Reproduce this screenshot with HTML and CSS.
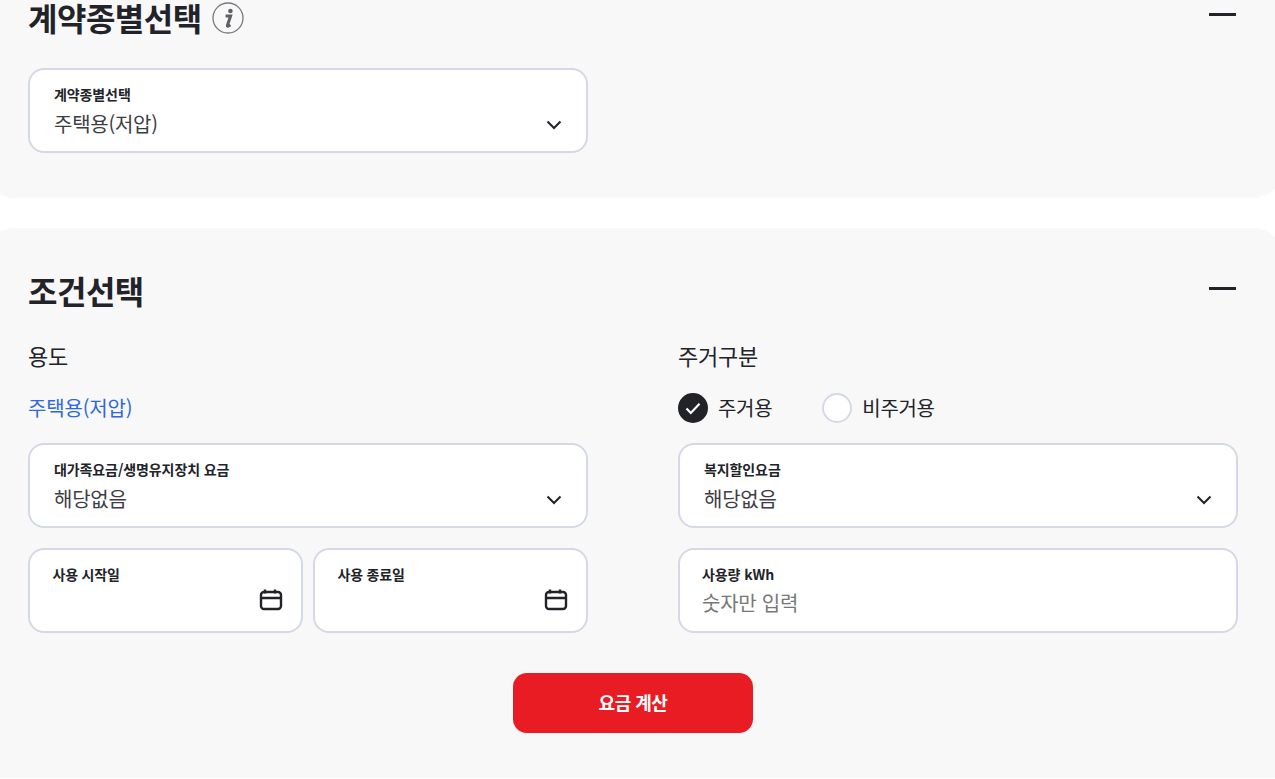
FILE: index.html
```html
<!DOCTYPE html>
<html lang="ko">
<head>
  <meta charset="UTF-8">
  <title>전기요금 계산</title>
  <link rel="stylesheet" href="styles.css">
</head>
<body>
  <section class="panel panel-first">
    <div class="panel-head">
      <h2 class="panel-title">계약종별선택
        <svg class="info-icon" width="32" height="32" viewBox="0 0 32 32"><circle cx="16" cy="16" r="15" fill="none" stroke="#77777c" stroke-width="1.3"/><circle cx="18.4" cy="9" r="2.3" fill="#5f5f65"/><path d="M13.6 13.9h5l-3.2 9.6c-.2.8.5 1 1.1.6l1.8-1.4" fill="none" stroke="#5f5f65" stroke-width="3"/></svg>
      </h2>
      <span class="dash"></span>
    </div>
    <div class="field-row half">
      <div class="field select">
        <label class="field-label">계약종별선택</label>
        <div class="field-value">주택용(저압)</div>
        <svg class="chevron" width="16" height="10" viewBox="0 0 16 10"><path d="M1.5 1.5 8 8l6.5-6.5" fill="none" stroke="#222329" stroke-width="2"/></svg>
      </div>
    </div>
  </section>

  <section class="panel panel-second">
    <div class="panel-head">
      <h2 class="panel-title">조건선택</h2>
      <span class="dash"></span>
    </div>
    <div class="columns">
      <div class="column">
        <h3 class="sub-title">용도</h3>
        <div class="sub-line"><a class="usage-link">주택용(저압)</a></div>
        <div class="field select">
          <label class="field-label">대가족요금/생명유지장치 요금</label>
          <div class="field-value">해당없음</div>
          <svg class="chevron" width="16" height="10" viewBox="0 0 16 10"><path d="M1.5 1.5 8 8l6.5-6.5" fill="none" stroke="#222329" stroke-width="2"/></svg>
        </div>
        <div class="date-row">
          <div class="field date">
            <label class="field-label">사용 시작일</label>
            <svg class="calendar" width="24" height="24" viewBox="0 0 24 24"><rect x="2" y="4" width="20" height="17" rx="3" fill="none" stroke="#222329" stroke-width="2.4"/><path d="M2 10h20M6 1.5v4M16 1.5v4" fill="none" stroke="#222329" stroke-width="2.4"/></svg>
          </div>
          <div class="field date">
            <label class="field-label">사용 종료일</label>
            <svg class="calendar" width="24" height="24" viewBox="0 0 24 24"><rect x="2" y="4" width="20" height="17" rx="3" fill="none" stroke="#222329" stroke-width="2.4"/><path d="M2 10h20M6 1.5v4M16 1.5v4" fill="none" stroke="#222329" stroke-width="2.4"/></svg>
          </div>
        </div>
      </div>
      <div class="column">
        <h3 class="sub-title">주거구분</h3>
        <div class="sub-line radios">
          <label class="radio">
            <span class="radio-mark checked"><svg width="16" height="13" viewBox="0 0 16 13"><path d="M1.5 6.5 5.8 11 14.5 1.8" fill="none" stroke="#fff" stroke-width="2.2"/></svg></span>
            <span class="radio-text">주거용</span>
          </label>
          <label class="radio">
            <span class="radio-mark"></span>
            <span class="radio-text">비주거용</span>
          </label>
        </div>
        <div class="field select">
          <label class="field-label">복지할인요금</label>
          <div class="field-value">해당없음</div>
          <svg class="chevron" width="16" height="10" viewBox="0 0 16 10"><path d="M1.5 1.5 8 8l6.5-6.5" fill="none" stroke="#222329" stroke-width="2"/></svg>
        </div>
        <div class="field input">
          <label class="field-label">사용량 kWh</label>
          <div class="field-value placeholder">숫자만 입력</div>
        </div>
      </div>
    </div>
    <div class="actions">
      <button class="calc-btn" type="button">요금 계산</button>
    </div>
  </section>
</body>
</html>
```

FILE: styles.css
```css
html, body {
  height: 779px;
  overflow: hidden;
}

body {
  margin: 0;
  background: #fff;
  color: #222329;
  font-family: "Noto Sans CJK KR", "Noto Sans", sans-serif;
}

/* panels run slightly past the window so only part of each corner shows */
.panel {
  margin: 0 -8px 0 -15px;
  padding: 0 45px 0 43px;
  background: #f8f8f8;
}

.panel-first {
  height: 198px;
  box-sizing: border-box;
  border-radius: 0 0 30px 30px;
}

.panel-second {
  height: 550px;
  box-sizing: border-box;
  margin-top: 30px;
  padding-top: 39px;
  border-radius: 30px 30px 0 0;
}

.panel-head {
  display: flex;
  align-items: center;
  justify-content: space-between;
  height: 46px;
}

.panel-first .panel-head {
  height: 34px;
  margin-bottom: 34px;
}

.panel-first .dash {
  margin-bottom: 5px;
}

.panel-title {
  display: flex;
  align-items: center;
  gap: 10px;
  margin: 0;
  font-size: 32px;
  font-weight: 700;
  line-height: 34px;
  letter-spacing: -0.5px;
}

.info-icon {
  margin-top: 2px;
}

.dash {
  width: 27px;
  height: 3px;
  margin: 0 2px 3px 0;
  background: #222329;
}

.field-row.half {
  width: 560px;
}

.columns {
  display: grid;
  grid-template-columns: 560px 560px;
  gap: 90px;
  margin-top: 22px;
}

.column {
  display: flex;
  flex-direction: column;
}

.sub-title {
  margin: 0;
  font-size: 22px;
  font-weight: 400;
  line-height: 40px;
  letter-spacing: -0.2px;
}

.sub-line {
  display: flex;
  align-items: center;
  height: 30px;
  margin: 18px 0 20px;
  font-size: 20px;
}

.usage-link {
  margin-top: -2px;
  color: #2c68e0;
  letter-spacing: -0.15px;
}

.radios {
  gap: 50px;
}

.radio {
  display: flex;
  align-items: center;
  gap: 10px;
  letter-spacing: -0.3px;
}

.radio-text {
  margin-top: -2px;
}

.radio-mark {
  display: flex;
  align-items: center;
  justify-content: center;
  box-sizing: border-box;
  width: 30px;
  height: 30px;
  border: 2px solid #d5d9e6;
  border-radius: 50%;
  background: #fff;
}

.radio-mark.checked {
  border: 0;
  background: #222329;
}

.field {
  position: relative;
  box-sizing: border-box;
  height: 85px;
  padding: 14px 24px;
  border: 2px solid #d5d9e6;
  border-radius: 16px;
  background: #fff;
}

.field-label {
  display: block;
  font-size: 14px;
  font-weight: 700;
  line-height: 20px;
  letter-spacing: -0.1px;
}

.field-value {
  margin-top: 5px;
  font-size: 20px;
  line-height: 30px;
  letter-spacing: -0.25px;
  color: #3c3d44;
}

.placeholder {
  margin-top: 4px;
  color: #777;
}

.chevron {
  position: absolute;
  right: 24px;
  bottom: 21px;
}

.date-row {
  display: flex;
  gap: 10px;
  margin-top: 20px;
}

.date-row .field {
  flex: 1;
  padding-left: 22.5px;
}

.date-row .field-label {
  letter-spacing: -0.2px;
}

.input {
  margin-top: 20px;
  padding-left: 22px;
}

.calendar {
  position: absolute;
  right: 18px;
  bottom: 19px;
}

.actions {
  display: flex;
  justify-content: center;
  margin-top: 40px;
}

.calc-btn {
  width: 240px;
  height: 60px;
  padding-bottom: 4px;
  border: 0;
  border-radius: 14px;
  background: #e91c24;
  color: #fff;
  font-family: inherit;
  font-size: 18px;
  font-weight: 700;
  letter-spacing: -0.5px;
}
```
